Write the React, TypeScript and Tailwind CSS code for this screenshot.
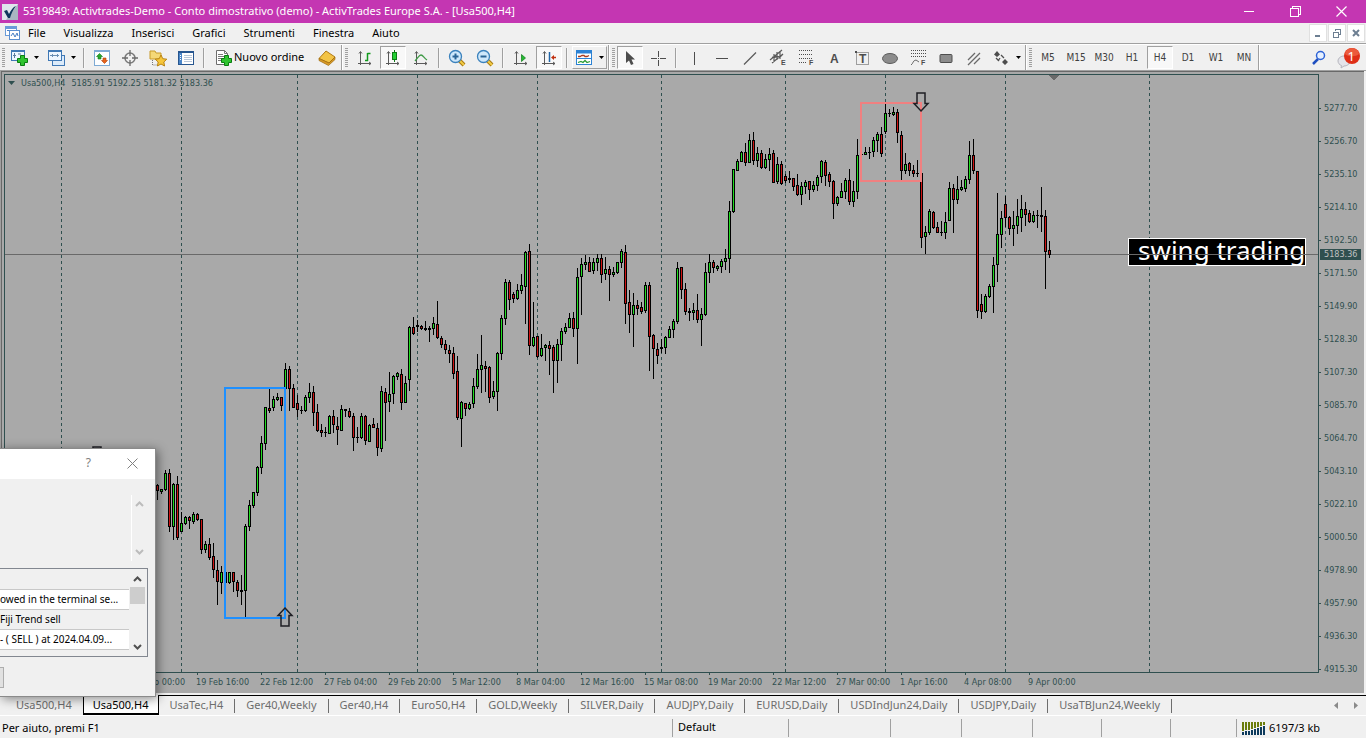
import { ReactNode } from "react";
import clsx from "clsx";

const CHART_FONT = "font-['DejaVu_Sans_Condensed','DejaVu_Sans',sans-serif]";

const menuItems = ["File", "Visualizza", "Inserisci", "Grafici", "Strumenti", "Finestra", "Aiuto"];

const timeframes = ["M5", "M15", "M30", "H1", "H4", "D1", "W1", "MN"];

const tabs = [
  "Usa500,H4",
  "Usa500,H4",
  "UsaTec,H4",
  "Ger40,Weekly",
  "Ger40,H4",
  "Euro50,H4",
  "GOLD,Weekly",
  "SILVER,Daily",
  "AUDJPY,Daily",
  "EURUSD,Daily",
  "USDIndJun24,Daily",
  "USDJPY,Daily",
  "UsaTBJun24,Weekly",
];
const activeTab = 1;

const prices = [
  "5277.70", "5256.70", "5235.10", "5214.10", "5192.50", "5171.50",
  "5149.90", "5128.30", "5107.30", "5085.70", "5064.70", "5043.10",
  "5022.10", "5000.50", "4978.90", "4957.90", "4936.30", "4915.30",
];

const dates = [
  "7 Feb 16:00", "12 Feb 08:00", "15 Feb 00:00", "19 Feb 16:00", "22 Feb 12:00",
  "27 Feb 04:00", "29 Feb 20:00", "5 Mar 12:00", "8 Mar 04:00", "12 Mar 16:00",
  "15 Mar 08:00", "19 Mar 20:00", "22 Mar 12:00", "27 Mar 00:00", "1 Apr 16:00",
  "4 Apr 08:00", "9 Apr 00:00",
];

const weekLines = [61, 181, 297, 417, 537, 661, 785, 885, 1005, 1149];

// high, body top, body bottom, low, direction (g up, r down, d doji)
const candles = `
484 485 491 500 r|489 489 492 494 g|470 473 490 491 g|469 473 527 532 r|483 484 527 540 g|476 484 538 540 r
512 523 532 532 g|516 517 524 525 g|516 517 521 529 r|512 514 522 524 g|513 514 520 521 r|519 519 550 554 r
541 544 550 553 g|538 544 558 560 r|543 556 570 578 r|560 570 582 605 r|566 572 583 594 g|572 572 583 583 g
572 572 583 584 g|572 572 582 592 r|580 582 591 597 r|575 590 592 605 d|524 526 591 617 g|500 505 527 531 g
492 492 506 508 g|466 467 493 496 g|436 443 468 474 g|407 407 444 450 g|389 408 411 413 r|396 399 408 411 g
393 397 400 401 g|397 397 406 411 r|363 369 389 406 g|366 369 389 411 r|384 388 408 408 r|395 403 410 417 r
406 410 411 414 d|395 397 411 412 g|383 392 398 403 g|386 392 413 426 r|404 412 431 432 r|424 430 433 437 r
427 432 433 437 d|415 416 434 434 g|410 416 425 433 r|417 426 430 445 r|405 409 431 431 g|409 409 411 417 d
408 411 417 418 r|413 416 438 451 r|427 437 438 443 d|413 416 438 439 g|415 416 441 445 r|424 425 442 442 g
418 424 428 428 r|423 428 448 456 r|386 391 449 452 g|388 392 403 441 r|372 394 402 412 g|375 376 394 404 g
372 373 377 380 g|369 374 403 410 r|376 383 403 403 g|326 327 380 391 g|317 327 334 335 r|320 325 327 332 d
325 326 329 330 r|321 328 330 331 d|326 328 330 342 d|317 323 329 335 g|301 324 338 339 r|336 338 345 348 r
340 344 350 354 r|345 350 354 363 r|347 353 374 379 r|356 371 418 420 r|401 402 419 447 g|403 403 409 416 r
402 404 409 410 g|378 386 404 408 g|354 369 387 389 g|335 365 370 393 g|361 366 369 392 r|366 367 398 403 r
381 391 397 399 g|352 353 392 411 g|315 318 354 360 g|279 282 319 325 g|280 282 300 310 r|292 294 299 303 r
284 290 299 300 g|274 285 291 294 g|251 252 287 324 g|244 251 346 355 r|302 337 346 347 g|336 336 357 358 r
334 348 356 357 g|344 345 348 361 g|341 345 349 375 r|345 347 361 393 r|339 344 361 383 g|328 331 345 361 g
323 327 332 334 g|313 318 328 328 g|312 318 329 337 r|268 277 329 364 g|258 264 277 315 g|255 262 265 270 g
257 262 272 272 r|258 262 271 274 g|254 258 263 271 g|254 258 275 283 r|257 269 274 280 g|266 269 275 301 r
267 272 275 277 g|262 262 273 274 g|249 251 263 268 g|245 252 304 324 r|290 302 315 333 r|293 305 315 347 g
300 305 309 315 r|302 307 312 314 r|282 285 311 313 g|282 285 337 371 r|334 335 349 379 r|343 349 356 364 r
339 347 349 353 d|336 337 348 354 g|326 329 338 338 g|319 321 330 338 g|262 268 322 324 g|267 267 290 299 r
283 289 312 315 r|308 311 313 321 d|303 310 313 320 g|294 310 320 323 r|308 314 320 346 g|263 272 315 316 g
254 262 273 283 g|260 262 268 273 r|265 266 269 271 g|259 261 267 273 g|249 258 262 270 g|201 211 259 273 g
169 169 212 213 g|159 161 171 171 g|151 152 162 162 g|143 152 163 166 r|134 140 163 163 g|132 140 161 165 r
147 153 161 167 g|150 153 168 169 r|154 159 168 169 g|148 154 160 171 g|150 153 183 183 r|157 164 182 184 g
161 164 184 185 r|174 176 181 183 r|171 178 180 183 d|178 178 187 191 r|174 185 195 196 r|182 186 195 205 g
180 182 187 194 g|181 181 190 200 r|181 185 190 192 g|175 177 186 191 g|160 161 177 183 g|160 162 176 186 r
172 174 182 187 r|180 181 204 219 r|196 197 204 206 g|183 191 198 198 g|178 180 192 199 g|169 180 202 205 r
181 191 202 207 g|139 155 192 199 g|154 154 155 155 d|147 152 155 155 g|147 152 153 159 d|137 140 152 157 g
132 134 141 152 g|127 134 154 157 r|104 113 132 134 g|109 113 114 117 d|107 112 115 116 g|109 112 133 143 r
131 135 171 180 r|153 164 171 174 g|162 163 171 176 r|165 170 174 177 r|160 173 174 177 d|173 173 238 248 r
226 232 237 254 g|209 211 233 235 g|211 212 228 229 r|222 227 233 233 r|221 232 233 236 d|212 222 233 239 g
182 188 221 221 g|184 188 200 233 r|176 189 200 204 g|180 187 190 191 g|176 179 189 192 g|141 155 180 184 g
139 155 171 174 r|171 171 311 318 r|294 304 312 319 r|294 296 312 313 g|284 286 297 298 g|257 265 287 313 g
193 234 265 282 g|211 218 235 248 g|196 204 218 227 r|216 217 229 235 r|211 225 229 246 g|199 216 226 234 g
195 209 218 232 g|202 209 215 226 r|210 213 222 223 r|211 215 222 223 g|210 215 216 228 d|187 215 217 232 d
210 216 252 289 r|241 250 255 258 r`
  .trim()
  .split(/[|\n]/)
  .map((row, i) => {
    const [h, t, b, l, dir] = row.split(" ");
    return { x: 157 + i * 4, high: +h, top: +t, bottom: +b, low: +l, dir };
  });

function Svg(props: { w?: number; h?: number; children: ReactNode; crisp?: boolean }) {
  const { w = 18, h = 18 } = props;
  return (
    <svg
      width={w}
      height={h}
      viewBox={`0 0 ${w} ${h}`}
      fill="none"
      aria-hidden="true"
      className="shrink-0"
      shapeRendering={props.crisp ? "crispEdges" : undefined}
    >
      {props.children}
    </svg>
  );
}

const Plus = () => (
  <path d="M10.500 6.500h4v3h3v4h-3v3h-4v-3h-3v-4h3z" fill="#2fc42f" stroke="#0a7d12" />
);

const NewChartIcon = () => (
  <Svg>
    <rect x="1.500" y="1.500" width="13" height="10" fill="#eef6ff" stroke="#3f78b5" />
    <path d="M1 2h14" stroke="#3f78b5" strokeWidth="2" />
    <path d="M4.500 4v5M3 6.500h3M8 5h3" stroke="#5b7d9e" />
    <Plus />
  </Svg>
);

const ProfilesIcon = () => (
  <Svg>
    <rect x="5.500" y="6.500" width="12" height="10" fill="#dcebfa" stroke="#3f78b5" />
    <rect x="1.500" y="1.500" width="13" height="10" fill="#eef6ff" stroke="#3f78b5" />
    <path d="M1 2h14" stroke="#3f78b5" strokeWidth="2" />
    <path d="M3 6.500h9M5.500 5v3M10.500 5v3" stroke="#6a8fb4" />
  </Svg>
);

const MarketIcon = () => (
  <Svg>
    <rect x="1.500" y="1.500" width="15" height="15" fill="#fdfeff" stroke="#7eaad4" />
    <path d="M2 2h14" stroke="#7eaad4" strokeWidth="2" />
    <path d="M6.500 4.500L9.500 7.500H8V10H5V7.500H3.500z" fill="#27a82b" stroke="#137a18" strokeWidth=".6" />
    <path d="M11.500 14.500L8.500 11.500h1.500V9h3v2.500h1.500z" fill="#e8641b" stroke="#b03d08" strokeWidth=".6" />
  </Svg>
);

const TargetIcon = () => (
  <Svg>
    <circle cx="9" cy="9" r="5" stroke="#7a7a7a" strokeWidth="1.500" />
    <path d="M9 1v6M9 11v6M1 9h6M11 9h6" stroke="#6a6a6a" strokeWidth="1.300" />
  </Svg>
);

const FolderStarIcon = () => (
  <Svg>
    <path d="M1 2h5l1 2h5v6H1z" fill="#f5d877" stroke="#c89b2a" />
    <path d="M3.500 11v5h4" stroke="#777" strokeDasharray="1 1" />
    <path d="M12 6l1.800 3.700 4 .5-3 2.800.8 4-3.600-2-3.600 2 .8-4-3-2.800 4-.5z" fill="#f6c63a" stroke="#b98312" />
  </Svg>
);

const NavigatorIcon = () => (
  <Svg>
    <rect x="1.500" y="2.500" width="15" height="13" fill="#fff" stroke="#27568f" />
    <path d="M1 3h16" stroke="#27568f" strokeWidth="2" />
    <path d="M3.500 4v11" stroke="#4b86c8" strokeWidth="3" />
    <path d="M7 6.500h8M7 8.500h8M7 10.500h8M7 12.500h8" stroke="#b8c6d8" />
    <path d="M3 6.500h1M3 8.500h1M3 10.500h1" stroke="#fff" />
  </Svg>
);

const OrderIcon = () => (
  <Svg>
    <path d="M2.500 1.500h8l3 3v11h-11z" fill="#fff" stroke="#6e6e6e" />
    <path d="M10.500 1.500v3h3M4 5.500h5M4 7.500h7M4 9.500h4M4 11.500h3" stroke="#7a7a7a" />
    <Plus />
  </Svg>
);

const GoldIcon = () => (
  <Svg>
    <path d="M8 2l9 6-6 6L1 9.500z" fill="#f3c446" stroke="#b07a15" />
    <path d="M1 9.500v2l9.500 5 6.500-6V8l-6 6z" fill="#d99a25" stroke="#9c6a10" strokeWidth=".7" />
  </Svg>
);

const Axes = () => <path d="M4.500 3v13M2 14.500h13M3 4.500l1.500-2L6 4.500M13 13l2 1.500-2 1.500" stroke="#5a5a5a" />;

const BarsIcon = () => (
  <Svg>
    <Axes />
    <path d="M11.500 4v8M11.500 4.500h3M9 11.500h3" stroke="#119a1d" strokeWidth="1.500" />
  </Svg>
);

const CandlesIcon = () => (
  <Svg>
    <Axes />
    <path d="M10.500 1v12" stroke="#0d7a15" />
    <rect x="8.500" y="3.500" width="4" height="7" fill="#22d032" stroke="#0d7a15" />
  </Svg>
);

const LineIcon = () => (
  <Svg>
    <Axes />
    <path d="M3 12c3-3 4-6 6-6s3 3 6 5" stroke="#3f9a46" strokeWidth="1.300" />
  </Svg>
);

const Zoom = (props: { plus?: boolean }) => (
  <Svg>
    <path d="M11 11l5 5" stroke="#a87a13" strokeWidth="4" />
    <path d="M11 11l5 5" stroke="#f2cb45" strokeWidth="2" />
    <circle cx="7.500" cy="7.500" r="6" fill="#cfe8fb" stroke="#3b82bd" strokeWidth="1.300" />
    <path d="M4.500 7.500h6" stroke="#2a6496" strokeWidth="2" />
    {props.plus && <path d="M7.500 4.500v6" stroke="#2a6496" strokeWidth="2" />}
  </Svg>
);

const ScrollIcon = () => (
  <Svg>
    <Axes />
    <path d="M9.500 5.500l4 3.500-4 3.500z" fill="#25b934" stroke="#0d7a15" strokeWidth=".7" />
  </Svg>
);

const ShiftIcon = () => (
  <Svg>
    <Axes />
    <path d="M9.500 3v10" stroke="#2267a8" strokeWidth="1.500" />
    <path d="M16 8.500h-3" stroke="#c03010" strokeWidth="1.500" />
    <path d="M11 8.500L14 6v5z" fill="#c03010" />
  </Svg>
);

const TemplateIcon = () => (
  <Svg>
    <rect x="1.500" y="1.500" width="15" height="14" fill="#fff" stroke="#2c82d4" />
    <path d="M1 3h16" stroke="#2c82d4" strokeWidth="3" />
    <path d="M2 9.500h14" stroke="#2c82d4" />
    <path d="M3 7.500h2l2-1h2l1 1h2l2-1" stroke="#a83c20" strokeWidth="1.300" />
    <path d="M3 13.500l3-1 2 1 2-2 2 2 3-1" stroke="#2a9b35" strokeWidth="1.300" />
  </Svg>
);

const CursorIcon = () => (
  <Svg>
    <path d="M5 2v12l3-2.500 2 4.500 2.500-1-2-4.500H14z" fill="#4d4d4d" />
  </Svg>
);

const CrossIcon = () => (
  <Svg crisp>
    <path d="M9.500 2v6M9.500 11v6M2 9.500h6M11 9.500h6" stroke="#4d4d4d" />
    <path d="M9 9.500h1" stroke="#4d4d4d" />
  </Svg>
);

function IconLetter(props: { x: number; y: number; size: number; children: string }) {
  return (
    <text
      x={props.x}
      y={props.y}
      fontSize={props.size}
      fill="#4d4d4d"
      className="font-['Liberation_Sans',sans-serif] font-bold"
    >
      {props.children}
    </text>
  );
}

const drawTools: { label: string; icon: ReactNode }[] = [
  { label: "Linea verticale", icon: <path d="M9.500 3v13" stroke="#4d4d4d" /> },
  { label: "Linea orizzontale", icon: <path d="M3 9.500h12" stroke="#4d4d4d" /> },
  { label: "Trendline", icon: <path d="M3 15.500L15 3.500" stroke="#5a5a5a" strokeWidth="1.300" /> },
  {
    label: "Canale equidistante",
    icon: (
      <>
        <path d="M1 11L13 1M3 14L14 5M5 5v8M8 3v8M11 2v8M3 8l2 1 3-2 3 1 3-3" stroke="#5a5a5a" strokeWidth="1.200" />
        <IconLetter x={12} y={16} size={7}>E</IconLetter>
      </>
    ),
  },
  {
    label: "Ritracciamenti di Fibonacci",
    icon: (
      <>
        <path d="M2 1.500h14M2 5.500h14M2 9.500h14M2 13.500h8" stroke="#4d4d4d" strokeDasharray="1 1" />
        <IconLetter x={12} y={16} size={7}>F</IconLetter>
      </>
    ),
  },
  { label: "Testo", icon: <IconLetter x={5} y={14} size={12}>A</IconLetter> },
  {
    label: "Etichetta",
    icon: (
      <>
        <rect x="3.500" y="3.500" width="12" height="12" stroke="#4d4d4d" strokeDasharray="1 1" />
        <IconLetter x={6} y={14} size={12}>T</IconLetter>
        <rect x="2" y="2" width="2" height="2" fill="#4d4d4d" />
      </>
    ),
  },
  { label: "Ellisse", icon: <ellipse cx="9" cy="9.500" rx="7.500" ry="5" fill="#8c8c8c" stroke="#5a5a5a" /> },
  {
    label: "Archi di Fibonacci",
    icon: (
      <>
        <path d="M2 1.500h15M2 4.500h15M2 7.500h15" stroke="#4d4d4d" strokeDasharray="1 1" />
        <path d="M2 16c2-1 2-5 5-5l3 2" stroke="#6a6a6a" />
        <IconLetter x={12} y={16} size={7}>F</IconLetter>
      </>
    ),
  },
  { label: "Rettangolo", icon: <rect x="3" y="5.500" width="12" height="8" rx="1" fill="#8c8c8c" stroke="#4d4d4d" /> },
  { label: "Linee cicliche", icon: <path d="M3 11L10 4M3 16L15 4M9 15l6-6" stroke="#6a6a6a" strokeWidth="1.300" /> },
];

const ShapesIcon = () => (
  <Svg>
    <path d="M5 2l3 3.500-3 2.500-3-2.500zM13 10l3 3-3 3-3-3z" fill="#4d4d4d" />
    <path d="M4 9l3 3M8 9l-2 3M9 6l3 3" stroke="#4d4d4d" strokeWidth="1.300" />
  </Svg>
);

const Caret = () => (
  <Svg w={5} h={3}>
    <path d="M0 0h5L2.500 3z" fill="#000" />
  </Svg>
);

function Grip(props: { className?: string }) {
  return (
    <span
      className={clsx(
        "h-[19px] w-[3px] shrink-0 bg-[repeating-linear-gradient(#a0a0a0_0_1px,transparent_1px_2px)]",
        props.className
      )}
    />
  );
}

function Separator() {
  return <span className="mx-[3px] h-5 w-[2px] shrink-0 border-l border-[#a0a0a0] bg-[#f7f7f7]" />;
}

function ToolButton(props: { label: string; pressed?: boolean; children: ReactNode }) {
  return (
    <button
      aria-label={props.label}
      className={clsx(
        "mx-px flex h-[23px] w-[26px] shrink-0 items-center justify-center border",
        props.pressed
          ? "border-t-[#a0a0a0] border-l-[#a0a0a0] border-r-white border-b-white bg-[#f8f8f8]"
          : "border-transparent"
      )}
    >
      {props.children}
    </button>
  );
}

function MenuButton(props: { label: string; raised?: boolean; children: ReactNode }) {
  return (
    <button
      aria-label={props.label}
      className={clsx(
        "flex h-[23px] shrink-0 items-center justify-center gap-[6px] border",
        props.raised
          ? "mx-px w-[35px] border-t-white border-l-white border-r-[#a0a0a0] border-b-[#a0a0a0]"
          : "w-[37px] border-transparent"
      )}
    >
      {props.children}
      <Caret />
    </button>
  );
}

function ToolGroup(props: { children: ReactNode }) {
  return (
    <div className="flex h-[25px] shrink-0 items-center border-r border-[#a0a0a0] shadow-[1px_0_0_#ffffff]">
      {props.children}
    </div>
  );
}

function TitleBar() {
  return (
    <header className="flex h-[23px] shrink-0 items-center bg-[#c436b2] text-white">
      <div className="mr-[5px] ml-[2px]">
        <Svg w={16} h={16}>
          <rect width="16" height="16" fill="#dfe6ec" />
          <path d="M16 0v16H4z" fill="#a9b6c2" />
          <path d="M2 7l3-1 2 4c2-4 4-7 7-8-3 4-5 8-6 12H6z" fill="#10375c" />
        </Svg>
      </div>
      <h1 className="truncate text-[11px]">
        5319849: Activtrades-Demo - Conto dimostrativo (demo) - ActivTrades Europe S.A. - [Usa500,H4]
      </h1>
      <div className="mr-[2px] ml-auto flex">
        <button aria-label="Riduci a icona" className="flex h-[20px] w-[45px] items-center justify-center">
          <Svg w={11} h={11} crisp>
            <path d="M0 5.500h10" stroke="#fff" />
          </Svg>
        </button>
        <button aria-label="Ripristina" className="flex h-[20px] w-[46px] items-center justify-center">
          <Svg w={11} h={11} crisp>
            <path d="M.5 2.500h8v8h-8zM2.500 2V.500h8v8H9" stroke="#fff" />
          </Svg>
        </button>
        <button aria-label="Chiudi" className="flex h-[20px] w-[46px] items-center justify-center">
          <Svg w={11} h={11}>
            <path d="M.5.500l10 10M10.500.500l-10 10" stroke="#fff" strokeWidth="1.200" />
          </Svg>
        </button>
      </div>
    </header>
  );
}

function MenuBar() {
  const box = "flex h-[18px] w-[18px] items-center justify-center border border-[#e0e0e0] bg-white";
  return (
    <nav className="flex h-5 shrink-0 items-center">
      <div className="mr-[-3px] ml-[4px]">
        <Svg w={18} h={16}>
          <rect x="1.500" y="1.500" width="11" height="9" fill="#fff" stroke="#6a9bd8" />
          <path d="M1 3h12" stroke="#6a9bd8" strokeWidth="2" />
          <rect x="5.500" y="5.500" width="10" height="9" fill="#fff" stroke="#5b8fd0" />
          <path d="M3 5.500h2M7 11l2-3 2 4 2-4 1 3" stroke="#4a80c4" />
        </Svg>
      </div>
      {menuItems.map((item) => (
        <button key={item} className="px-[9px] text-[11px]">
          {item}
        </button>
      ))}
      <div className="ml-auto flex gap-px pr-px">
        <button aria-label="Riduci grafico" className={box}>
          <Svg w={10} h={10} crisp>
            <path d="M2 8h5" stroke="#6d7f92" strokeWidth="2" />
          </Svg>
        </button>
        <button aria-label="Ripristina grafico" className={box}>
          <Svg w={10} h={10} crisp>
            <path d="M3 1.500h6M3.500 1v2M8.500 1v5H7M1 4.500h6M1.500 4v5h5V4" stroke="#6d7f92" />
          </Svg>
        </button>
        <button aria-label="Chiudi grafico" className={box}>
          <Svg w={10} h={10}>
            <path d="M2 2l6 6M8 2L2 8" stroke="#6d7f92" strokeWidth="2" />
          </Svg>
        </button>
      </div>
    </nav>
  );
}

function Toolbar() {
  return (
    <div className="flex h-[27px] shrink-0 items-center overflow-hidden border-t border-[#a0a0a0] pt-px shadow-[inset_0_1px_0_#ffffff]">
      <ToolGroup>
        <Grip className="mr-px ml-[2px]" />
        <MenuButton label="Nuovo grafico"><NewChartIcon /></MenuButton>
        <MenuButton label="Profili"><ProfilesIcon /></MenuButton>
        <Separator />
        <ToolButton label="Market watch"><MarketIcon /></ToolButton>
        <ToolButton label="Finestra dati"><TargetIcon /></ToolButton>
        <ToolButton label="Navigatore"><FolderStarIcon /></ToolButton>
        <ToolButton label="Terminale"><NavigatorIcon /></ToolButton>
        <Separator />
        <button className="flex h-[23px] w-[105px] shrink-0 items-center gap-[2px] pl-[6px] text-[11px] whitespace-nowrap">
          <OrderIcon />
          Nuovo ordine
        </button>
        <ToolButton label="MetaEditor"><GoldIcon /></ToolButton>
      </ToolGroup>
      <ToolGroup>
        <Grip className="mx-[3px]" />
        <ToolButton label="Barre"><BarsIcon /></ToolButton>
        <ToolButton label="Candele" pressed><CandlesIcon /></ToolButton>
        <ToolButton label="Linea"><LineIcon /></ToolButton>
        <Separator />
        <ToolButton label="Ingrandisci"><Zoom plus /></ToolButton>
        <ToolButton label="Riduci"><Zoom /></ToolButton>
        <Separator />
        <ToolButton label="Scorrimento automatico"><ScrollIcon /></ToolButton>
        <ToolButton label="Spostamento grafico" pressed><ShiftIcon /></ToolButton>
        <Separator />
        <MenuButton label="Modelli" raised><TemplateIcon /></MenuButton>
      </ToolGroup>
      <ToolGroup>
        <Grip className="mr-px ml-[3px]" />
        <ToolButton label="Cursore" pressed><CursorIcon /></ToolButton>
        <ToolButton label="Mirino"><CrossIcon /></ToolButton>
        <Separator />
        {drawTools.map((tool) => (
          <ToolButton key={tool.label} label={tool.label}>
            <Svg>{tool.icon}</Svg>
          </ToolButton>
        ))}
        <MenuButton label="Frecce"><ShapesIcon /></MenuButton>
      </ToolGroup>
      <ToolGroup>
        <Grip className="mr-[2px] ml-[3px]" />
        {timeframes.map((tf) => (
          <ToolButton key={tf} label={tf} pressed={tf === "H4"}>
            <span className={clsx("text-[10px] text-[#404040]", CHART_FONT)}>{tf}</span>
          </ToolButton>
        ))}
      </ToolGroup>
      <button aria-label="Cerca" className="ml-auto shrink-0">
        <Svg w={16} h={16}>
          <path d="M2 14l5-5" stroke="#1f4fc0" strokeWidth="2.500" />
          <circle cx="9.500" cy="5.500" r="4" fill="#e6f0ff" stroke="#2d62d6" strokeWidth="1.500" />
        </Svg>
      </button>
      <button aria-label="Notifiche" className="relative mr-[5px] ml-2 h-6 w-[26px] shrink-0">
        <Svg w={26} h={24}>
          <path d="M3 15c0-3 3-5 6-5s6 2 6 5-3 5-6 5l-3 2 .500-2.500C4.500 19 3 17 3 15z" fill="#e4e4ea" stroke="#b5b5bd" />
          <circle cx="17" cy="10" r="8" fill="#df2f17" />
          <path d="M10 8a7 6 0 0114 0c-3 3-11 3-14 0z" fill="#ec5a3c" />
        </Svg>
        <span className="absolute top-0 right-[6px] text-[13px] leading-5 text-white">1</span>
      </button>
    </div>
  );
}

const BlockArrow = (props: { x: number; y: number; flip?: boolean }) => (
  <path
    transform={`translate(${props.x} ${props.y}) scale(1 ${props.flip ? -1 : 1})`}
    d="M0 0L7 7.500H4V18H-4V7.500H-7z"
    fill="none"
    stroke="#1f1f24"
    strokeWidth="1.500"
  />
);

function Plot() {
  return (
    <div className="relative min-h-0 overflow-hidden border border-[#2f4f4f]">
      <svg className="absolute inset-0 h-full w-full" role="img" aria-label="Usa500 H4">
        <g transform="translate(-5 -75)" shapeRendering="crispEdges">
          {weekLines.map((x) => (
            <path key={x} d={`M${x + 0.5} 75V2000`} stroke="#2f4f4f" strokeDasharray="3 3" />
          ))}
          <path d="M1048 75h11l-5.500 5.500z" fill="#696969" />
          <rect x="1128.500" y="238.500" width="177" height="27" fill="#000" stroke="#fff" />
          <svg x="1129" y="239" width="176" height="26">
            <text x="9" y="21" fontSize="26" fill="#fff" className="font-['Noto_Sans',sans-serif]">
              swing trading
            </text>
          </svg>
          <rect x="5" y="254" width="100%" height="1" fill="#696969" />
          {candles.map((c) => (
            <g key={c.x}>
              <rect x={c.x} y={c.high} width="1" height={Math.max(1, c.low - c.high)} fill="#000" />
              <rect x={c.x - 1} y={c.top} width="3" height={c.bottom - c.top} fill="#000" />
              {c.dir !== "d" && (
                <rect
                  x={c.x}
                  y={c.top + 1}
                  width="1"
                  height={c.bottom - c.top - 2}
                  fill={c.dir === "g" ? "#22dd22" : "#d01414"}
                />
              )}
            </g>
          ))}
          <rect x="225" y="388" width="60" height="230" fill="none" stroke="#1e90ff" strokeWidth="2" />
          <rect x="861" y="103" width="60" height="78" fill="none" stroke="#f08080" strokeWidth="2" />
        </g>
        <g transform="translate(-5 -75)">
          <BlockArrow x={285} y={608} />
          <BlockArrow x={921} y={111} flip />
          <BlockArrow x={97} y={465} flip />
        </g>
      </svg>
      <div className="relative flex items-center gap-[6px] pl-[3px] leading-4 whitespace-pre">
        <Svg w={7} h={4}>
          <path d="M0 0h7L3.500 4z" fill="#2f4f4f" />
        </Svg>
        <span>Usa500,H4</span>
        <span>5185.91 5192.25 5181.32 5183.36</span>
      </div>
    </div>
  );
}

function Chart() {
  return (
    <div
      className={clsx(
        "grid min-h-0 flex-1 grid-cols-[1fr_45px] grid-rows-[1fr_20px] border-t border-l border-[#696969] bg-[#a9a9a9] pt-[2px] pl-[2px] text-[9px] text-[#2f4f4f]",
        CHART_FONT
      )}
    >
      <Plot />
      <div className="relative overflow-hidden pt-[18px]">
        {prices.map((price) => (
          <div key={price} className="flex h-[33px] items-center">
            <span className="mr-[3px] h-px w-[2px] bg-[#2f4f4f]" />
            {price}
          </div>
        ))}
        <div className="absolute top-[175px] left-px h-[11px] w-[41px] bg-[#2f4f4f] pl-1 leading-[11px] text-[#c0c0c0]">
          5183.36
        </div>
      </div>
      <div className="flex overflow-hidden">
        {dates.map((date) => (
          <div key={date} className="w-16 shrink-0 whitespace-nowrap">
            <div className="ml-px h-[2px] w-px bg-[#2f4f4f]" />
            <div className="leading-[15px]">{date}</div>
          </div>
        ))}
      </div>
    </div>
  );
}

function ChartTabs() {
  return (
    <div className="flex h-5 shrink-0 border-t border-black text-[11px] text-[#6d6d6d]">
      <div role="tablist" className="flex min-w-0 flex-1 overflow-x-clip pl-[5px]">
        {tabs.map((tab, i) => (
          <button
            key={i}
            role="tab"
            aria-selected={i === activeTab}
            className={clsx(
              "flex shrink-0 items-center",
              i === activeTab
                ? "-mt-px h-5 border-x border-b-2 border-black bg-white px-[9px] pt-[2px] text-black"
                : "h-[19px] px-[11px]"
            )}
          >
            {tab}
            {i > activeTab && <span className="relative left-[11px] h-[14px] w-px bg-[#6d6d6d]" />}
          </button>
        ))}
      </div>
      <div className="flex items-center gap-4 pr-2">
        <Svg w={4} h={7}>
          <path d="M4 0v7L0 3.500z" fill="#8a8a8a" />
        </Svg>
        <Svg w={4} h={7}>
          <path d="M0 0v7l4-3.500z" fill="#8a8a8a" />
        </Svg>
      </div>
    </div>
  );
}

function StatusBar() {
  const cell = "h-[18px] shrink-0 border-l border-[#a0a0a0]";
  return (
    <footer className="flex h-[23px] shrink-0 items-center border-t border-white pt-[2px] text-[11px]">
      <div className="min-w-0 flex-1 truncate pl-[2px]">Per aiuto, premi F1</div>
      <div className={clsx(cell, "w-[116px] pl-[5px]")}>Default</div>
      <div className={clsx(cell, "w-[102px]")} />
      <div className={clsx(cell, "w-[71px]")} />
      <div className={clsx(cell, "w-[71px]")} />
      <div className={clsx(cell, "w-[69px]")} />
      <div className={clsx(cell, "w-[69px]")} />
      <div className={clsx(cell, "w-[66px]")} />
      <div className={clsx(cell, "flex w-[130px] items-center gap-1 pl-[5px]")}>
        <Svg w={23} h={13} crisp>
          {[10, 9, 9, 8, 7, 6, 5, 4].map((h, i) => (
            <g key={i}>
              <rect x={i * 3} y="0" width="2" height={h - 1} fill="#6b7d0c" />
              <rect x={i * 3} y={h} width="2" height={13 - h} fill="#0d3a5c" />
            </g>
          ))}
        </Svg>
        6197/3 kb
      </div>
    </footer>
  );
}

const Chevron = (props: { down?: boolean; color: string }) => (
  <Svg w={9} h={6}>
    <path d={props.down ? "M1 1l3.500 3.500L8 1" : "M1 5l3.500-3.500L8 5"} stroke={props.color} strokeWidth="2" />
  </Svg>
);

function AlertDialog() {
  const row = "h-5 truncate border-b border-[#c8c8c8] leading-[19px]";
  return (
    <section
      aria-label="Alert"
      className="absolute bottom-[41px] left-0 h-[249px] w-[156px] border-t border-r border-b border-[#8a8a8a] bg-[#f0f0f0] text-[10px] shadow-[2px_2px_10px_rgba(0,0,0,0.45)]"
    >
      <div className="flex h-[30px] items-center justify-end bg-white pr-[17px] pb-[2px] text-[#808080]">
        <button aria-label="Aiuto" className="mr-9 text-[12px]">?</button>
        <button aria-label="Chiudi avviso">
          <Svg w={11} h={11}>
            <path d="M.5.500l10 10M10.500.500l-10 10" stroke="#808080" />
          </Svg>
        </button>
      </div>
      <div className="mt-4 ml-[131px] flex h-[66px] w-4 flex-col items-center justify-between border-l border-white py-[6px]">
        <Chevron color="#bcbcbc" />
        <Chevron down color="#bcbcbc" />
      </div>
      <div className="mt-[7px] flex h-[89px] w-[148px] border-y border-r border-[#828790] p-px pl-0">
        <ul className="w-[129px] overflow-hidden">
          <li className={row} />
          <li className={clsx(row, "bg-white")}>owed in the terminal se...</li>
          <li className={row}>Fiji Trend sell</li>
          <li className={clsx(row, "bg-white")}>- ( SELL ) at 2024.04.09...</li>
        </ul>
        <div className="ml-px flex w-[15px] flex-col items-center pt-[6px] pb-[5px]">
          <Chevron color="#505050" />
          <div className="mt-[5px] h-[17px] w-full bg-[#cdcdcd]" />
          <div className="mt-auto flex">
            <Chevron down color="#505050" />
          </div>
        </div>
      </div>
      <button aria-label="OK" className="mt-[10px] block h-[21px] w-1 border border-l-0 border-[#adadad] bg-[#e1e1e1]" />
    </section>
  );
}

export default function App() {
  return (
    <div className="relative flex h-screen w-full flex-col overflow-hidden bg-[#f0f0f0] font-['Noto_Sans',sans-serif] text-black">
      <TitleBar />
      <MenuBar />
      <Toolbar />
      <main className="mb-[2px] flex min-h-0 flex-1 flex-col border-t border-l border-[#a0a0a0] pr-[2px]">
        <Chart />
      </main>
      <ChartTabs />
      <StatusBar />
      <AlertDialog />
    </div>
  );
}
